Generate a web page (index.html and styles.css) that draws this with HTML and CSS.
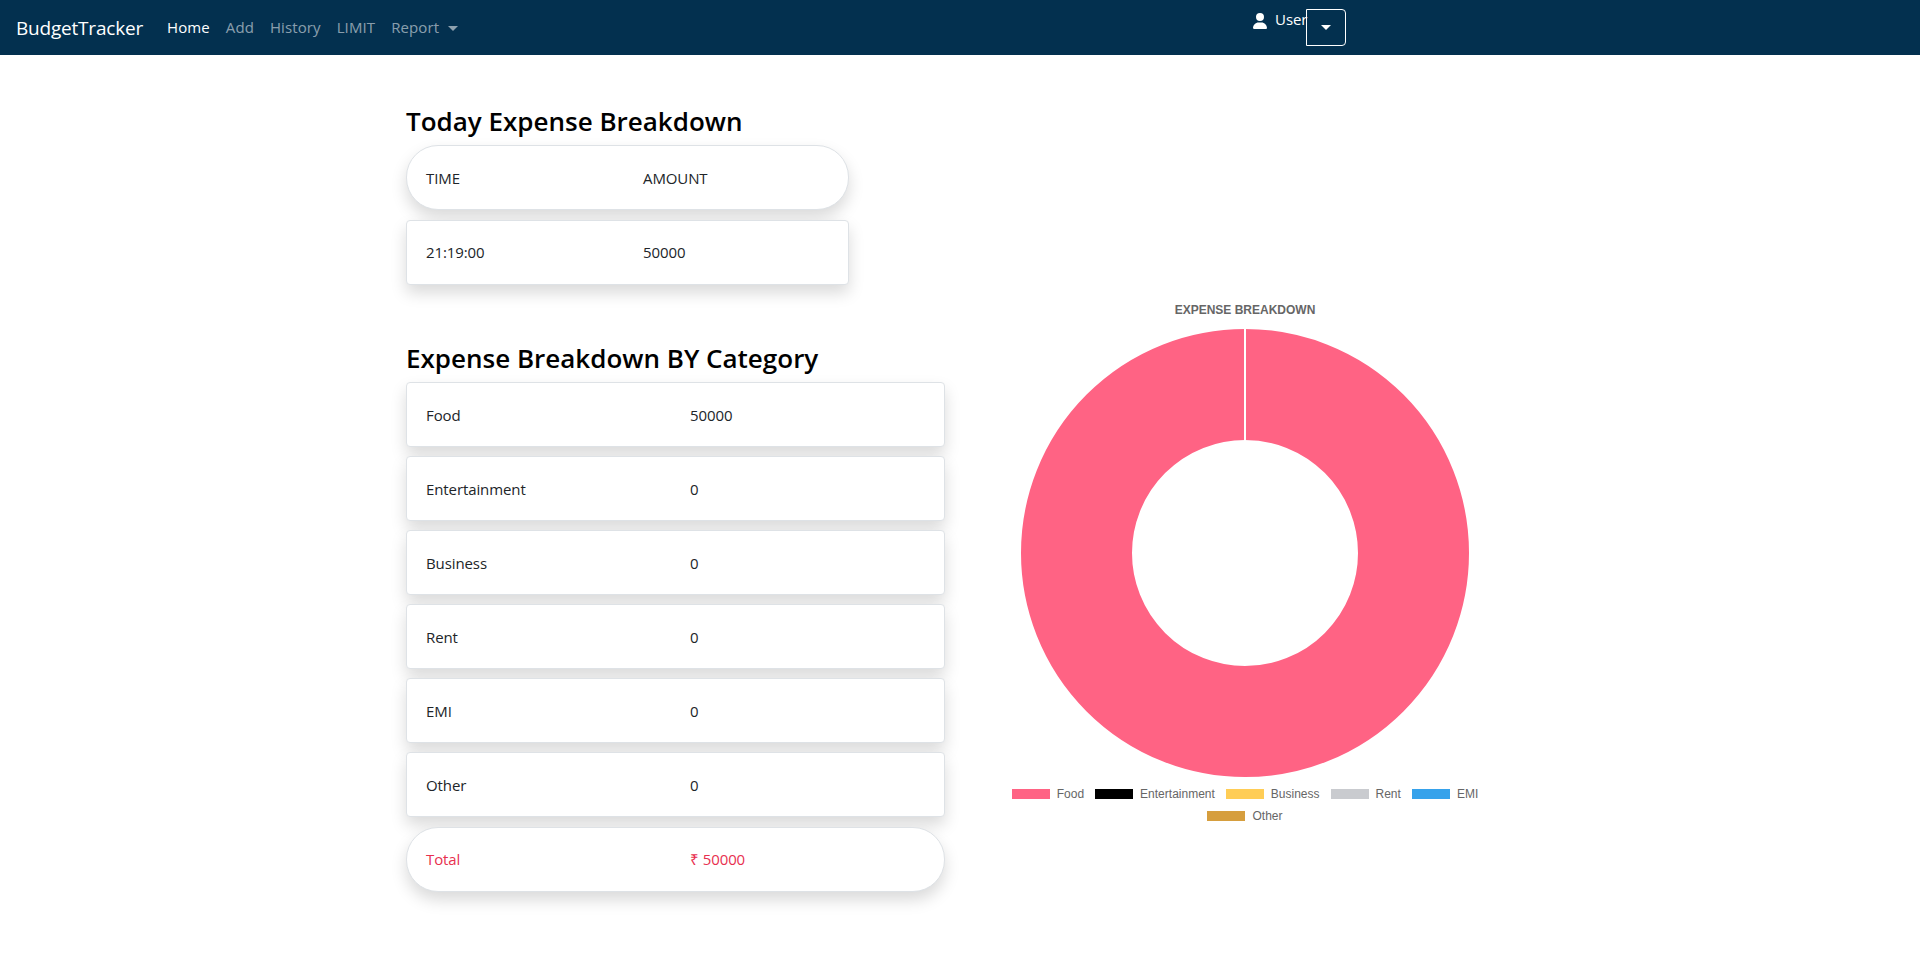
FILE: index.html
```html
<!DOCTYPE html>
<html lang="en">

<head>
	<meta charset="UTF-8">
	<meta name="viewport" content="width=device-width, initial-scale=1.0">
	<title>BudgetTracker</title>
	<link rel="stylesheet" href="styles.css">
</head>

<body>
	<nav class="navbar">
		<a class="brand" href="#">BudgetTracker</a>
		<ul class="nav-links">
			<li><a class="active" href="#">Home</a></li>
			<li><a href="#">Add</a></li>
			<li><a href="#">History</a></li>
			<li><a href="#">LIMIT</a></li>
			<li><a href="#">Report <span class="caret report-caret"></span></a></li>
		</ul>
		<div class="nav-user">
			<svg class="user-icon" viewBox="0 0 448 512" aria-hidden="true">
				<path fill="currentColor" d="M224 256A128 128 0 1 0 224 0a128 128 0 1 0 0 256zm-45.7 48C79.8 304 0 383.8 0 482.3C0 498.7 13.3 512 29.7 512H418.3c16.4 0 29.7-13.3 29.7-29.7C448 383.8 368.2 304 269.7 304H178.3z"/>
			</svg>
			<span class="user-name">User</span>
			<button class="user-toggle" type="button"><span class="caret"></span></button>
		</div>
	</nav>

	<main class="page">
		<section class="tables">
			<h3>Today Expense Breakdown</h3>
			<div class="breakdown today">
				<div class="row pill"><span>TIME</span><span>AMOUNT</span></div>
				<div class="row"><span>21:19:00</span><span>50000</span></div>
			</div>

			<h3 class="second">Expense Breakdown BY Category</h3>
			<div class="breakdown category">
				<div class="row"><span>Food</span><span>50000</span></div>
				<div class="row"><span>Entertainment</span><span>0</span></div>
				<div class="row"><span>Business</span><span>0</span></div>
				<div class="row"><span>Rent</span><span>0</span></div>
				<div class="row"><span>EMI</span><span>0</span></div>
				<div class="row"><span>Other</span><span>0</span></div>
				<div class="row pill total"><span>Total</span><span>₹ 50000</span></div>
			</div>
		</section>

		<section class="chart">
			<div class="chart-title">EXPENSE BREAKDOWN</div>
			<svg class="donut" viewBox="0 0 448 448" aria-hidden="true">
				<circle cx="224" cy="224" r="168.5" fill="none" stroke="#ff6384" stroke-width="111"/>
				<rect x="223" y="0" width="2" height="111" fill="#fff"/>
			</svg>
			<ul class="legend">
				<li><i class="swatch food"></i>Food</li>
				<li><i class="swatch entertainment"></i>Entertainment</li>
				<li><i class="swatch business"></i>Business</li>
				<li><i class="swatch rent"></i>Rent</li>
				<li><i class="swatch emi"></i>EMI</li>
				<li><i class="swatch other"></i>Other</li>
			</ul>
		</section>
	</main>
</body>

</html>
```

FILE: styles.css
```css
* {
	box-sizing: border-box;
}

body {
	font-family: "Open Sans", Arial, sans-serif;
	font-size: 15px;
	letter-spacing: -0.1px;
	margin: 0;
	background-color: #fff;
	color: #212529;
}

ul {
	list-style: none;
	margin: 0;
	padding: 0;
}

a {
	text-decoration: none;
}

/* Navbar */
.navbar {
	display: flex;
	align-items: center;
	height: 55px;
	padding: 0 16px;
	background-color: #03304f;
}

.brand {
	font-size: 19px;
	letter-spacing: -0.2px;
	color: #fff;
	margin-right: 16px;
}

.nav-links {
	display: flex;
	letter-spacing: 0.1px;
	margin-top: -2px;
}

.nav-links a {
	display: block;
	padding: 8px;
	color: rgba(255, 255, 255, 0.55);
}

.nav-links a.active {
	color: #fff;
}

.caret {
	display: inline-block;
	border-top: 5px solid #fff;
	border-left: 5px solid transparent;
	border-right: 5px solid transparent;
}

.report-caret {
	border-top-color: rgba(255, 255, 255, 0.55);
	margin-left: 5px;
	vertical-align: 2px;
}

.nav-user {
	display: flex;
	align-items: flex-start;
	margin-left: 787px;
	color: #fff;
	height: 37px;
}

.user-icon {
	width: 14px;
	height: 16px;
	margin: 4px 8px 0 0;
}

.user-name {
	line-height: 20px;
	width: 31px;
}

.user-toggle {
	display: flex;
	align-items: center;
	justify-content: center;
	width: 40px;
	height: 37px;
	padding: 0;
	background: transparent;
	border: 1px solid #fff;
	border-radius: 0 4px 4px 0;
}

/* Tables */
.page {
	display: flex;
	padding: 49px 0 40px 406px;
}

.tables {
	width: 539px;
	margin-right: 55px;
}

h3 {
	font-size: 26px;
	font-weight: 600;
	line-height: 34px;
	margin: 0 0 7px;
	letter-spacing: 0;
	color: #000;
}

h3.second {
	margin-top: 56.5px;
}

.breakdown {
	display: flex;
	flex-direction: column;
	gap: 9.1px;
}

.today {
	width: 443px;
	gap: 9.5px;
}

.row {
	display: grid;
	align-items: center;
	height: 65px;
	padding: 0 20px 0 19px;
	background: #fff;
	border: 1px solid #dee2e6;
	border-radius: 4px;
	box-shadow: 0 8px 16px rgba(0, 0, 0, 0.15);
}

.today .row {
	grid-template-columns: 217px 1fr;
}

.category .row {
	grid-template-columns: 264px 1fr;
}

.pill {
	border-radius: 32px;
}

.total {
	color: #e8304f;
}

/* Chart */
.chart {
	display: flex;
	flex-direction: column;
	align-items: center;
	width: 490px;
	margin-top: 199px;
	font-family: "Liberation Sans", Arial, sans-serif;
	font-size: 12px;
	letter-spacing: 0;
	color: #666;
}

.chart-title {
	font-weight: 700;
	line-height: 14px;
	margin-bottom: 12px;
}

.donut {
	display: block;
	width: 448px;
	height: 448px;
}

.legend {
	display: flex;
	flex-wrap: wrap;
	justify-content: center;
	gap: 8px 11px;
	width: 480px;
	margin-top: 10px;
}

.legend li {
	display: flex;
	align-items: center;
	line-height: 14px;
}

.swatch {
	width: 38px;
	height: 10px;
	margin-right: 7px;
}

.food { background-color: #ff6384; }
.entertainment { background-color: #000; }
.business { background-color: #ffcd56; }
.rent { background-color: #c9cbcf; }
.emi { background-color: #36a2eb; }
.other { background-color: #d69e3e; }
```
